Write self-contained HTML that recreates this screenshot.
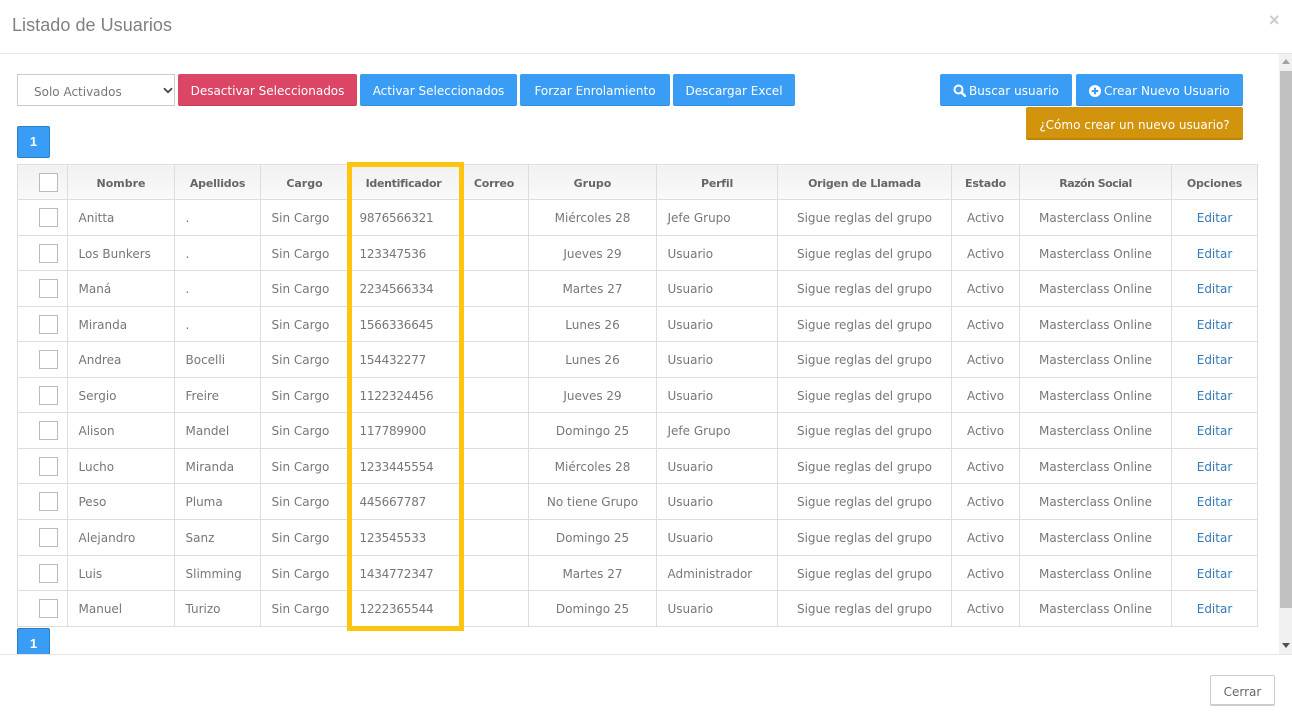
<!DOCTYPE html>
<html lang="es">
<head>
<meta charset="utf-8">
<title>Listado de Usuarios</title>
<style>
html,body{margin:0;padding:0;background:#fff;width:1292px;height:717px;overflow:hidden}
body{position:relative;font-family:"DejaVu Sans","Liberation Sans",sans-serif;font-size:12px;color:#777}
.abs{position:absolute;box-sizing:border-box}
.title{left:12px;top:14px;font-family:"Liberation Sans",sans-serif;font-size:18px;line-height:22px;color:#808080;white-space:nowrap;letter-spacing:.05px}
.close{left:1269px;top:12px;font-family:"Liberation Sans",sans-serif;font-size:18px;font-weight:bold;line-height:16px;color:#ccc}
.line{left:0;width:1292px;height:1px;background:#e5e5e5}
.sel{left:17px;top:74px;width:158px;height:32px;border:1px solid #ccc;background:#fff;color:#777;line-height:34px;padding-left:16px;font-size:12px}
.btn{height:32px;background:#3a9df5;color:#fff;border-radius:2px;text-align:center;line-height:35px;font-size:12px;white-space:nowrap;border-bottom:1px solid #2f8ee0}
.red{background:#dc4666;border-bottom-color:#c93c5a}
.gold{background:#d3940d;border-bottom:2px solid #bb830a;height:33px}
.pg{left:17px;width:33px;height:32px;background:#3a9df5;border:1px solid #2b7fc4;border-radius:2px;color:#fff;font:bold 13px/30px "Liberation Sans",sans-serif;text-align:center}
.clip{left:0;top:54px;width:1278px;height:600px;overflow:hidden}
table{position:absolute;left:17px;top:110px;border-collapse:collapse;table-layout:fixed;width:1240px}
td,th{border:1px solid #ddd;padding:0 10.5px;white-space:nowrap;overflow:hidden;box-sizing:border-box;text-align:left;font-weight:normal}
th{background:linear-gradient(#f1f1f1,#fafafa);font-size:11px;font-weight:bold;color:#666;text-align:center;padding:2px 2px 0;letter-spacing:-.2px}
tr.s td{padding-top:1px}
.c{text-align:center;padding:0 2px}
tr.s td.c{padding-top:1px}
.b{border:1px solid #bbb;background:#fff;margin:0 auto 0 21px;box-sizing:content-box;width:17px;height:17px}
td.k,th.k,tr.s td.k{padding:0;text-align:left}
td.i{letter-spacing:-.25px}
a{color:#337ab7;text-decoration:none}
.hl{left:347px;top:162px;width:117px;height:469px;border:5px solid #fdc50b}
.track{left:1279px;top:54px;width:13px;height:600px;background:#f1f1f1}
.thumb{left:1280px;top:71px;width:12px;height:537px;background:#c1c1c1}
.up{left:1282px;top:59px;width:0;height:0;border:4px solid transparent;border-bottom:5px solid #a3a3a3;border-top:0}
.dn{left:1282px;top:643px;width:0;height:0;border:4px solid transparent;border-top:5px solid #505050;border-bottom:0}
.cerrar{left:1210px;top:675px;width:65px;height:31px;background:#fff;border:1px solid #ccc;border-bottom:2px solid #ccc;border-radius:2px;text-align:center;line-height:33px;font-size:12px;color:#666}
svg{vertical-align:-2px}
</style>
</head>
<body>
<div class="abs title">Listado de Usuarios</div>
<div class="abs close">×</div>
<div class="abs line" style="top:53px"></div>

<div class="abs clip">
<table>
<colgroup><col style="width:50px"><col style="width:107px"><col style="width:86px"><col style="width:88px"><col style="width:115px"><col style="width:65px"><col style="width:128px"><col style="width:121px"><col style="width:174px"><col style="width:68px"><col style="width:152px"><col style="width:86px"></colgroup>
<tr style="height:35px"><th class="k"><div class="b"></div></th><th style="letter-spacing:0">Nombre</th><th>Apellidos</th><th style="letter-spacing:0">Cargo</th><th style="letter-spacing:-.3px;padding-right:7px">Identificador</th><th style="padding-right:6px">Correo</th><th style="letter-spacing:0">Grupo</th><th>Perfil</th><th style="letter-spacing:-.25px">Origen de Llamada</th><th>Estado</th><th style="letter-spacing:-.5px">Razón Social</th><th>Opciones</th></tr>
<tr style="height:36px"><td class="k"><div class="b"></div></td><td>Anitta</td><td>.</td><td>Sin Cargo</td><td class="i">9876566321</td><td></td><td class="c">Miércoles 28</td><td>Jefe Grupo</td><td class="c">Sigue reglas del grupo</td><td class="c">Activo</td><td class="c">Masterclass Online</td><td class="c"><a>Editar</a></td></tr>
<tr class="s" style="height:35px"><td class="k"><div class="b"></div></td><td>Los Bunkers</td><td>.</td><td>Sin Cargo</td><td class="i">123347536</td><td></td><td class="c">Jueves 29</td><td>Usuario</td><td class="c">Sigue reglas del grupo</td><td class="c">Activo</td><td class="c">Masterclass Online</td><td class="c"><a>Editar</a></td></tr>
<tr style="height:36px"><td class="k"><div class="b"></div></td><td>Maná</td><td>.</td><td>Sin Cargo</td><td class="i">2234566334</td><td></td><td class="c">Martes 27</td><td>Usuario</td><td class="c">Sigue reglas del grupo</td><td class="c">Activo</td><td class="c">Masterclass Online</td><td class="c"><a>Editar</a></td></tr>
<tr class="s" style="height:35px"><td class="k"><div class="b"></div></td><td>Miranda</td><td>.</td><td>Sin Cargo</td><td class="i">1566336645</td><td></td><td class="c">Lunes 26</td><td>Usuario</td><td class="c">Sigue reglas del grupo</td><td class="c">Activo</td><td class="c">Masterclass Online</td><td class="c"><a>Editar</a></td></tr>
<tr style="height:36px"><td class="k"><div class="b"></div></td><td>Andrea</td><td>Bocelli</td><td>Sin Cargo</td><td class="i">154432277</td><td></td><td class="c">Lunes 26</td><td>Usuario</td><td class="c">Sigue reglas del grupo</td><td class="c">Activo</td><td class="c">Masterclass Online</td><td class="c"><a>Editar</a></td></tr>
<tr class="s" style="height:35px"><td class="k"><div class="b"></div></td><td>Sergio</td><td>Freire</td><td>Sin Cargo</td><td class="i">1122324456</td><td></td><td class="c">Jueves 29</td><td>Usuario</td><td class="c">Sigue reglas del grupo</td><td class="c">Activo</td><td class="c">Masterclass Online</td><td class="c"><a>Editar</a></td></tr>
<tr style="height:36px"><td class="k"><div class="b"></div></td><td>Alison</td><td>Mandel</td><td>Sin Cargo</td><td class="i">117789900</td><td></td><td class="c">Domingo 25</td><td>Jefe Grupo</td><td class="c">Sigue reglas del grupo</td><td class="c">Activo</td><td class="c">Masterclass Online</td><td class="c"><a>Editar</a></td></tr>
<tr class="s" style="height:35px"><td class="k"><div class="b"></div></td><td>Lucho</td><td>Miranda</td><td>Sin Cargo</td><td class="i">1233445554</td><td></td><td class="c">Miércoles 28</td><td>Usuario</td><td class="c">Sigue reglas del grupo</td><td class="c">Activo</td><td class="c">Masterclass Online</td><td class="c"><a>Editar</a></td></tr>
<tr style="height:36px"><td class="k"><div class="b"></div></td><td>Peso</td><td>Pluma</td><td>Sin Cargo</td><td class="i">445667787</td><td></td><td class="c">No tiene Grupo</td><td>Usuario</td><td class="c">Sigue reglas del grupo</td><td class="c">Activo</td><td class="c">Masterclass Online</td><td class="c"><a>Editar</a></td></tr>
<tr style="height:36px"><td class="k"><div class="b"></div></td><td>Alejandro</td><td>Sanz</td><td>Sin Cargo</td><td class="i">123545533</td><td></td><td class="c">Domingo 25</td><td>Usuario</td><td class="c">Sigue reglas del grupo</td><td class="c">Activo</td><td class="c">Masterclass Online</td><td class="c"><a>Editar</a></td></tr>
<tr class="s" style="height:35px"><td class="k"><div class="b"></div></td><td>Luis</td><td>Slimming</td><td>Sin Cargo</td><td class="i">1434772347</td><td></td><td class="c">Martes 27</td><td>Administrador</td><td class="c">Sigue reglas del grupo</td><td class="c">Activo</td><td class="c">Masterclass Online</td><td class="c"><a>Editar</a></td></tr>
<tr style="height:36px"><td class="k"><div class="b"></div></td><td>Manuel</td><td>Turizo</td><td>Sin Cargo</td><td class="i">1222365544</td><td></td><td class="c">Domingo 25</td><td>Usuario</td><td class="c">Sigue reglas del grupo</td><td class="c">Activo</td><td class="c">Masterclass Online</td><td class="c"><a>Editar</a></td></tr>
</table>
<div class="abs pg" style="top:574px;height:40px">1</div>
</div>

<div class="abs sel">Solo Activados<svg class="abs" style="left:145px;top:12px" width="10" height="7" viewBox="0 0 10 7"><path d="M1 1.2L5 5.2L9 1.2" fill="none" stroke="#444" stroke-width="1.8"/></svg></div>
<div class="abs btn red" style="left:178px;top:74px;width:179px">Desactivar Seleccionados</div>
<div class="abs btn" style="left:360px;top:74px;width:157px">Activar Seleccionados</div>
<div class="abs btn" style="left:520px;top:74px;width:150px">Forzar Enrolamiento</div>
<div class="abs btn" style="left:673px;top:74px;width:122px">Descargar Excel</div>
<div class="abs btn" style="left:940px;top:74px;width:132px"><svg width="13" height="13" viewBox="0 0 13 13"><circle cx="5.5" cy="5.5" r="4" fill="none" stroke="#fff" stroke-width="2"/><path d="M8.5 8.5L12 12" stroke="#fff" stroke-width="2.4" stroke-linecap="round"/></svg> <span style="margin-left:-1px;letter-spacing:.05px">Buscar usuario</span></div>
<div class="abs btn" style="left:1076px;top:74px;width:167px"><svg width="12" height="12" viewBox="0 0 12 12"><circle cx="6" cy="6" r="6" fill="#fff"/><path d="M6 2.7V9.3M2.7 6H9.3" stroke="#3a9df5" stroke-width="2"/></svg> <span style="margin-left:-1px;letter-spacing:.08px">Crear Nuevo Usuario</span></div>
<div class="abs btn gold" style="left:1026px;top:107px;width:217px;line-height:36px">¿Cómo crear un nuevo usuario?</div>
<div class="abs pg" style="top:126px">1</div>

<div class="abs hl"></div>
<div class="abs track"></div>
<div class="abs thumb"></div>
<div class="abs up"></div>
<div class="abs dn"></div>
<div class="abs line" style="top:654px"></div>
<div class="abs cerrar">Cerrar</div>
</body>
</html>
